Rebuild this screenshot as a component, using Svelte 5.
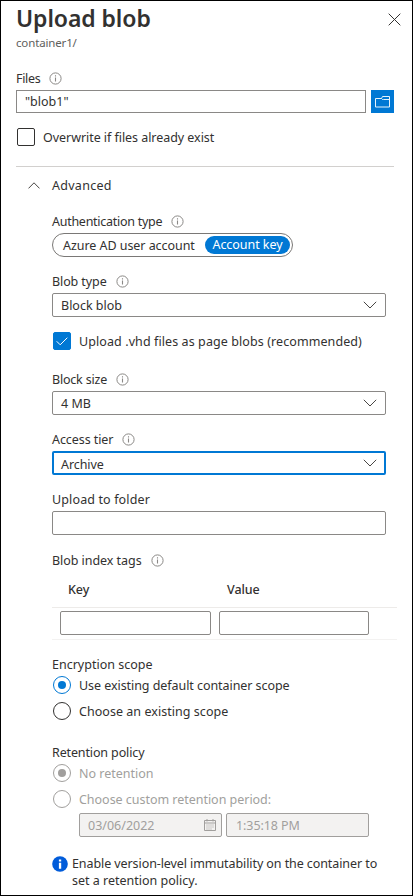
<script>
  let overwrite = $state(false);
  let vhdAsPage = $state(true);
  const encryption = [
    { text: 'Use existing default container scope', on: true, cls: 'use' },
    { text: 'Choose an existing scope', on: false, cls: 'choose' }
  ];
  const retention = [
    { text: 'No retention', on: true, cls: 'none' },
    { text: 'Choose custom retention period:', on: false, cls: 'custom' }
  ];
</script>

{#snippet info()}
  <svg class="info" width="13" height="13" viewBox="0 0 13 13" fill="none">
    <circle cx="6.5" cy="6.5" r="5.6" stroke="#8a8886" stroke-width="1" />
    <path d="M6.5 5.4v4.1M6.5 3.3v1.2" stroke="#8a8886" stroke-width="1.1" />
  </svg>
{/snippet}

{#snippet label(text, hasInfo)}
  <div class="label"><span>{text}</span>{#if hasInfo}{@render info()}{/if}</div>
{/snippet}

{#snippet select(value, focused)}
  <div class="field select" class:focused>
    <span>{value}</span>
    <svg width="14" height="8" viewBox="0 0 14 8" fill="none"><path d="M.8.8 7 7 13.2.8" stroke="#484644" stroke-width="1" /></svg>
  </div>
{/snippet}

{#snippet radio(item, disabled)}
  <div class="option {item.cls}" class:disabled>
    <span class="dot" class:on={item.on}></span><span class="text">{item.text}</span>
  </div>
{/snippet}

<main>
  <header>
    <h1>Upload blob</h1>
    <svg class="close" width="13" height="13" viewBox="0 0 13 13" fill="none"><path d="M.7.7l11.6 11.6M12.3.7.7 12.3" stroke="#323130" stroke-width="1" /></svg>
  </header>
  <p class="path">container1/</p>

  <div class="files-label">{@render label('Files', true)}</div>
  <div class="files">
    <div class="field file"><span>"blob1"</span></div>
    <button aria-label="Browse">
      <svg width="16" height="12" viewBox="0 0 16 12" fill="none">
        <path d="M.5 2.500H6.500L7.500 3.500 8.500 3.500H14.500M6.500 2.500 7.500.500H14.500V11H.500V2.500" stroke="#e6f2fb" stroke-width="1" />
      </svg>
    </button>
  </div>
  <div class="option overwrite">
    <button class="check" class:on={overwrite} aria-label="Overwrite" onclick={() => (overwrite = !overwrite)}></button>
    <span class="text">Overwrite if files already exist</span>
  </div>

  <hr />
  <div class="advanced">
    <svg width="12" height="7" viewBox="0 0 12 7" fill="none"><path d="M.5 6.4 6 .8l5.500 5.600" stroke="#484644" stroke-width="1" /></svg>
    <span>Advanced</span>
  </div>

  <section>
    <div class="auth">{@render label('Authentication type', true)}</div>
    <div class="pill"><span>Azure AD user account</span><span class="active">Account key</span></div>

    <div class="group type">
      {@render label('Blob type', true)}
      {@render select('Block blob', false)}
    </div>
    <div class="option vhd">
      <button class="check" class:on={vhdAsPage} aria-label="Upload vhd" onclick={() => (vhdAsPage = !vhdAsPage)}>
        <svg width="12" height="9" viewBox="0 0 12 9" fill="none"><path d="M.7 4.300 4.200 7.800 11.300.700" stroke="#fff" stroke-width="1" /></svg>
      </button>
      <span class="text">Upload .vhd files as page blobs (recommended)</span>
    </div>
    <div class="group size">
      {@render label('Block size', true)}
      {@render select('4 MB', false)}
    </div>
    <div class="group tier">
      {@render label('Access tier', true)}
      {@render select('Archive', true)}
    </div>
    <div class="group folder">
      {@render label('Upload to folder', false)}
      <div class="field"></div>
    </div>

    <div class="tags">{@render label('Blob index tags', true)}</div>
    <div class="heads"><span>Key</span><span>Value</span></div>
    <div class="tagrow"><div class="field key"></div><div class="field value"></div></div>

    <div class="encryption">
      {@render label('Encryption scope', false)}
      {#each encryption as item}{@render radio(item, false)}{/each}
    </div>
    <div class="retention">
      {@render label('Retention policy', false)}
      {#each retention as item}{@render radio(item, true)}{/each}
    </div>
    <div class="when">
      <div class="field date">
        <span>03/06/2022</span>
        <svg width="12" height="12" viewBox="0 0 12 12" fill="none">
          <path d="M.5 1.500h11v10H.5zM.5 4h11M3 0v2.500M9 0v2.500" stroke="#a19f9d" />
          <path d="M2.500 6h7.500M2.500 8h7.500M2.500 10h5" stroke="#a19f9d" stroke-dasharray="1 1" />
        </svg>
      </div>
      <div class="field time"><span>1:35:18 PM</span></div>
    </div>
    <div class="notice">
      <svg width="16" height="16" viewBox="0 0 16 16">
        <circle cx="8" cy="8" r="7.800" fill="#015cda" />
        <path d="M6.900 6.700h2.300v6H6.900zM6.900 3.400h2.300v2H6.900z" fill="#fff" />
      </svg>
      <p><span class="first">Enable version-level immutability on the container to</span><br />set a retention policy.</p>
    </div>
  </section>
</main>

<style>
  :global(body) { margin: 0; background: #fff; }
  main {
    box-sizing: border-box;
    width: 413px;
    height: 896px;
    overflow: hidden;
    border: 1px solid #000;
    padding-left: 15px;
    background: #fff;
    color: #323130;
    font: 12.5px/18px "Noto Sans", "Open Sans", sans-serif;
    white-space: nowrap;
  }
  h1, p { margin: 0; }
  header { display: flex; justify-content: space-between; height: 34px; padding-right: 11px; }
  h1 { font-size: 23px; line-height: 34px; font-weight: 600; letter-spacing: -0.08px; }
  .close { margin-top: 12px; }
  .path { height: 18px; margin-top: -1px; font-size: 11.5px; letter-spacing: -0.15px; color: #605e5c; }
  .files-label { margin-top: 17px; letter-spacing: -0.3px; }
  .label { display: flex; align-items: center; gap: 9px; height: 18px; }
  .label span, .text, .advanced span { padding-top: 2px; }
  .info { flex: none; }
  .files { display: flex; gap: 5px; margin-top: 3px; }
  .field {
    box-sizing: border-box;
    display: flex;
    align-items: center;
    width: 334px;
    height: 24px;
    border: 1px solid #8a8886;
    border-radius: 2px;
    padding: 0 8px;
    background: #fff;
  }
  .file { width: 350px; height: 23px; border-radius: 0; }
  button { box-sizing: border-box; border: 0; padding: 0; display: flex; align-items: center; justify-content: center; }
  .files button { width: 23px; height: 23px; background: #0078d4; }
  .option { display: flex; align-items: center; gap: 8px; height: 18px; margin-left: 1px; }
  .check { width: 18px; height: 18px; border: 1px solid #323130; border-radius: 2px; background: #fff; }
  .check.on { background: #0078d4; border-color: #0078d4; }
  .overwrite { margin-top: 15px; letter-spacing: -0.05px; }
  hr { width: 378px; height: 1px; margin: 20px 0 0; border: 0; background: #d2d0ce; }
  .advanced { display: flex; align-items: center; gap: 12px; height: 18px; margin: 9px 0 0 12px; letter-spacing: 0.28px; }
  section { margin-left: 36px; }
  .auth { margin-top: 18px; letter-spacing: -0.27px; }
  .pill {
    box-sizing: border-box;
    display: flex;
    align-items: center;
    justify-content: space-between;
    width: 241px;
    height: 24px;
    margin-top: 3px;
    border: 1px solid #7a7876;
    border-radius: 12px;
    padding: 0 2px 0 10px;
    letter-spacing: -0.05px;
  }
  .pill span:first-child { padding-top: 2px; }
  .active { box-sizing: border-box; width: 85px; height: 18px; border-radius: 9px; background: #0078d4; color: #fff; text-align: center; }
  .group { display: flex; flex-direction: column; gap: 3px; margin-top: 15px; }
  .type .label { letter-spacing: -0.1px; }
  .size .label { letter-spacing: -0.2px; }
  .tier { letter-spacing: -0.08px; }
  .folder { letter-spacing: 0.13px; }
  .select { justify-content: space-between; padding: 0 8px; }
  .select span { padding-top: 2px; }
  .type .select span { padding-top: 1px; }
  .focused { border: 2px solid #0078d4; padding: 0 7px; }
  .focused span { padding-top: 3px; }
  .vhd { margin-top: 15px; letter-spacing: 0.09px; }
  .vhd + .group { margin-top: 20px; }
  .tags { margin-top: 16px; letter-spacing: -0.05px; }
  .heads { display: flex; height: 26px; margin-top: 12px; padding-left: 16px; border-bottom: 1px solid #edebe9; width: 329px; font-weight: 500; letter-spacing: -0.05px; }
  .heads span:first-child { width: 159px; }
  .tagrow { box-sizing: border-box; display: flex; gap: 8px; width: 345px; height: 32px; padding: 3px 0 0 8px; border-bottom: 1px solid #f3f2f1; }
  .key { width: 151px; }
  .value { width: 150px; }
  .encryption { margin-top: 15px; }
  .encryption .option, .retention .option { margin-top: 3px; }
  .encryption .option + .option, .retention .option + .option { margin-top: 8px; }
  .use { letter-spacing: -0.06px; }
  .choose { letter-spacing: 0.04px; }
  .custom { letter-spacing: -0.03px; }
  .retention { margin-top: 23px; }
  .retention .label { letter-spacing: -0.13px; }
  .dot { box-sizing: border-box; display: flex; width: 18px; height: 18px; border: 1px solid #323130; border-radius: 50%; }
  .dot.on { border-color: #0078d4; }
  .dot.on::after { content: ""; width: 8px; height: 8px; margin: auto; border-radius: 50%; background: #0078d4; }
  .disabled { color: #a19f9d; }
  .disabled .dot { border-color: #a19f9d; }
  .disabled .dot::after { background: #a19f9d; }
  .when { display: flex; gap: 4px; margin: 5px 0 0 27px; color: #a19f9d; }
  .when .field { width: 143px; background: #f3f2f1; border-color: #a19f9d; }
  .when span { padding-top: 2px; }
  .date { justify-content: space-between; padding-right: 5px; }
  .time { padding-left: 9px; letter-spacing: -0.08px; }
  .notice { display: flex; gap: 4px; margin-top: 18px; line-height: 17px; }
  .notice svg { flex: none; margin-top: 1px; }
  .first { letter-spacing: -0.085px; }
</style>
